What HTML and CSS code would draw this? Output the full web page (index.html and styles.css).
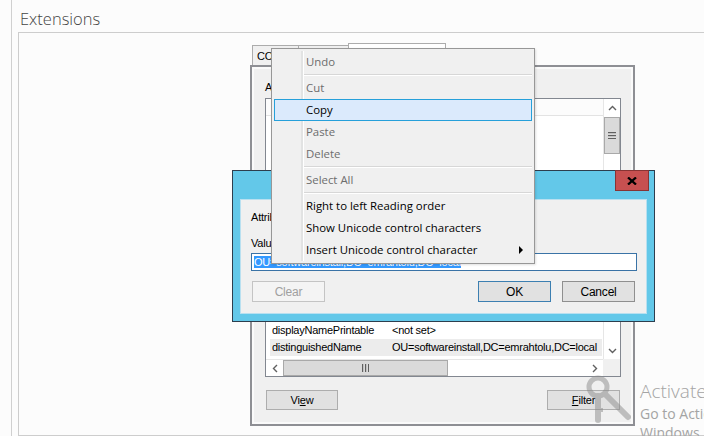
FILE: index.html
```html
<!DOCTYPE html>
<html>
<head>
<meta charset="utf-8">
<title>Extensions</title>
<link rel="stylesheet" href="styles.css">
</head>
<body>
<div class="page">
  <div class="title">Extensions</div>
  <div class="box">

    <div class="propwin">
      <div class="tabs">
        <div class="tab t1">COM+</div>
        <div class="tab t2">Object</div>
        <div class="tab t3">Attribute Editor</div>
      </div>
      <div class="frame">
        <div class="lbl">Attributes:</div>
        <div class="list">
          <div class="list-main">
            <div class="list-head"><span class="c1">Attribute</span><span class="c2">Value</span></div>
            <div class="rows">
              <div class="row"><span class="c1">adminDescription</span><span class="c2">&lt;not set&gt;</span></div>
              <div class="row"><span class="c1">adminDisplayName</span><span class="c2">&lt;not set&gt;</span></div>
              <div class="row"><span class="c1">businessCategory</span><span class="c2">&lt;not set&gt;</span></div>
              <div class="row"><span class="c1">c</span><span class="c2">&lt;not set&gt;</span></div>
              <div class="row"><span class="c1">co</span><span class="c2">&lt;not set&gt;</span></div>
              <div class="row"><span class="c1">countryCode</span><span class="c2">&lt;not set&gt;</span></div>
              <div class="row"><span class="c1">defaultGroup</span><span class="c2">&lt;not set&gt;</span></div>
              <div class="row"><span class="c1">description</span><span class="c2">&lt;not set&gt;</span></div>
              <div class="row"><span class="c1">desktopProfile</span><span class="c2">&lt;not set&gt;</span></div>
              <div class="row"><span class="c1">destinationIndicator</span><span class="c2">&lt;not set&gt;</span></div>
              <div class="row"><span class="c1">displayName</span><span class="c2">&lt;not set&gt;</span></div>
              <div class="row"><span class="c1">displayNamePrintable</span><span class="c2">&lt;not set&gt;</span></div>
              <div class="row sel"><span class="c1">distinguishedName</span><span class="c2">OU=softwareinstall,DC=emrahtolu,DC=local</span></div>
            </div>
          </div>
          <div class="vscroll">
            <div class="sb-btn"><svg width="9" height="6" viewBox="0 0 9 6"><polyline points="1,5 4.5,1.5 8,5" fill="none" stroke="#606060" stroke-width="1.4"/></svg></div>
            <div class="vthumb"><svg width="8" height="7" viewBox="0 0 8 7"><rect x="0" y="0" width="8" height="1.2" fill="#606060"/><rect x="0" y="3" width="8" height="1.2" fill="#606060"/><rect x="0" y="6" width="8" height="1" fill="#606060"/></svg></div>
            <div class="vtrack"></div>
            <div class="sb-btn"><svg width="9" height="6" viewBox="0 0 9 6"><polyline points="1,1 4.5,4.5 8,1" fill="none" stroke="#606060" stroke-width="1.4"/></svg></div>
          </div>
          <div class="hscroll">
            <div class="sb-btn h"><svg width="6" height="9" viewBox="0 0 6 9"><polyline points="5,1 1.5,4.5 5,8" fill="none" stroke="#606060" stroke-width="1.4"/></svg></div>
            <div class="hthumb"><svg width="7" height="8" viewBox="0 0 7 8"><rect x="0" y="0" width="1.2" height="8" fill="#606060"/><rect x="3" y="0" width="1.2" height="8" fill="#606060"/><rect x="6" y="0" width="1" height="8" fill="#606060"/></svg></div>
            <div class="htrack"></div>
            <div class="sb-btn h"><svg width="6" height="9" viewBox="0 0 6 9"><polyline points="1,1 4.5,4.5 1,8" fill="none" stroke="#606060" stroke-width="1.4"/></svg></div>
          </div>
          <div class="corner"></div>
        </div>
        <div class="btnrow">
          <button class="btn">Vi<u>e</u>w</button>
          <button class="btn"><u>F</u>ilter</button>
        </div>
      </div>
    </div>

    <div class="dlg">
      <div class="dlg-close"><svg width="10" height="8" viewBox="0 0 10 8"><path d="M1 0.5 L9 7.5 M9 0.5 L1 7.5" stroke="#000" stroke-width="2.3" fill="none"/></svg></div>
      <div class="dlg-body">
        <div class="d-lbl">Attribute:</div>
        <div class="d-lbl d-lbl2">Value:</div>
        <div class="d-input"><span class="selt">OU=softwareinstall,DC=emrahtolu,DC=local</span></div>
        <div class="d-btns">
          <button class="btn dbtn dis">Clear</button>
          <button class="btn dbtn def">OK</button>
          <button class="btn dbtn cancel">Cancel</button>
        </div>
      </div>
    </div>

    <div class="menu">
      <div class="mi dis">Undo</div>
      <div class="sep"></div>
      <div class="mi dis">Cut</div>
      <div class="mi hl">Copy</div>
      <div class="mi dis">Paste</div>
      <div class="mi dis">Delete</div>
      <div class="sep"></div>
      <div class="mi dis">Select All</div>
      <div class="sep"></div>
      <div class="mi">Right to left Reading order</div>
      <div class="mi">Show Unicode control characters</div>
      <div class="mi">Insert Unicode control character<span class="sub"></span></div>
    </div>

  </div>
</div>

<svg class="key" width="52" height="54" viewBox="0 0 52 54">
  <circle cx="15" cy="15" r="9" fill="none" stroke="#8c8c8c" stroke-width="5"/>
  <path d="M15 24 L15 48" stroke="#8c8c8c" stroke-width="6" stroke-linecap="round"/>
  <path d="M22 22 L45 45" stroke="#8c8c8c" stroke-width="6" stroke-linecap="round"/>
  <path d="M15 38 L20 38" stroke="#8c8c8c" stroke-width="4"/>
</svg>
<div class="wm">
  <div class="wm1">Activate Windows</div>
  <div class="wm2">Go to Action Center to activate</div>
  <div class="wm2">Windows.</div>
</div>
</body>
</html>
```
FILE: styles.css
```css
* { box-sizing: border-box; margin: 0; padding: 0; }
html, body { width: 704px; height: 436px; overflow: hidden; }
body {
  background: #fcfcfc;
  font-family: "Liberation Sans", Arial, sans-serif;
  font-size: 11px;
  color: #000;
  position: relative;
}
.page {
  margin-left: 11px;
  border-left: 1px solid #d0d0d0;
  height: 436px;
  padding-left: 6px;
}
.title {
  height: 32px;
  padding: 5px 0 0 2px;
  font-family: "Open Sans", sans-serif;
  font-weight: 300;
  font-size: 16.5px;
  line-height: 27px;
  color: #444;
}
.box {
  position: relative;
  width: 720px;
  height: 404px;
  border: 1px solid #cdcdcd;
  background: #fcfcfc;
}

/* property window */
.propwin {
  position: absolute;
  left: 231px;
  top: 10px;
  width: 385px;
}
.tabs {
  display: flex;
  align-items: flex-end;
  height: 22px;
  padding-left: 2px;
}
.tab {
  height: 20px;
  border: 1px solid #acacac;
  border-bottom: none;
  background: #f0f0f0;
  padding: 0 4px;
  line-height: 20px;
  white-space: nowrap;
  overflow: hidden;
  letter-spacing: -0.2px;
}
.t1 { width: 47px; }
.t2 { width: 51px; margin-left: -1px; }
.t3 { width: 98px; height: 22px; background: #fff; margin-left: -1px; }
.frame {
  height: 361px;
  border: 2px solid #8e8f94;
  background: #f0f0f0;
  box-shadow: inset 0 0 0 2px #fafafa;
  padding: 13px 12px 0 13px;
  display: flex;
  flex-direction: column;
}
.lbl { height: 14px; line-height: 14px; margin-bottom: 4px; }
.list {
  height: 279px;
  border: 1px solid #828790;
  background: #fff;
  display: grid;
  grid-template-columns: 1fr 17px;
  grid-template-rows: 1fr 17px;
}
.list-main {
  display: flex;
  flex-direction: column;
  min-height: 0;
  overflow: hidden;
}
.list-head {
  height: 17px;
  flex: none;
  display: flex;
  background: #fcfcfc;
  border-bottom: 1px solid #e3e3e3;
  line-height: 16px;
  padding-left: 4px;
}
.rows {
  flex: 1;
  display: flex;
  flex-direction: column;
  justify-content: flex-end;
  padding-bottom: 3px;
  overflow: hidden;
}
.row {
  height: 17px;
  flex: none;
  line-height: 17px;
  display: flex;
  margin: 0 1px 0 4px;
  white-space: nowrap;
  letter-spacing: -0.25px;
}
.c1 { width: 120px; padding-left: 2px; flex: none; }
.c2 { padding-left: 2px; }
.row.sel { background: #ececec; }

.vscroll {
  display: flex;
  flex-direction: column;
  background: #fff;
  border-left: 1px solid #e6e6e6;
}
.sb-btn {
  height: 17px;
  flex: none;
  display: flex;
  align-items: center;
  justify-content: center;
  background: #fff;
}
.sb-btn.h { width: 17px; height: 100%; }
.vthumb {
  height: 37px;
  margin-top: 1px;
  background: #dadada;
  border: 1px solid #a9a9a9;
  display: flex;
  align-items: center;
  justify-content: center;
}
.vtrack { flex: 1; }
.hscroll {
  display: flex;
  background: #fff;
  border-top: 1px solid #e6e6e6;
}
.hthumb {
  width: 165px;
  background: #dadada;
  border: 1px solid #a9a9a9;
  display: flex;
  align-items: center;
  justify-content: center;
}
.htrack { flex: 1; }
.corner { background: #f0f0f0; }

.btnrow {
  margin-top: 13px;
  display: flex;
  justify-content: space-between;
  padding: 0 1px;
}
.btn {
  width: 73px;
  height: 20px;
  border: 1px solid #adadad;
  background: #e1e1e1;
  font-family: "Liberation Sans", Arial, sans-serif;
  font-size: 11px;
  color: #000;
  letter-spacing: -0.2px;
}
.btnrow .btn:first-child { width: 72px; }

/* dialog */
.dlg {
  position: absolute;
  left: 213px;
  top: 137px;
  width: 423px;
  height: 152px;
  border: 1px solid #2d3e4e;
  background: #63c8e9;
  padding: 28px 7px 7px;
}
.dlg-close {
  position: absolute;
  right: 5px;
  top: -1px;
  width: 34px;
  height: 21px;
  background: #c75050;
  border: 1px solid #873434;
  display: flex;
  align-items: center;
  justify-content: center;
}
.dlg-body {
  height: 115px;
  background: #f0f0f0;
  border: 1px solid #b9e0f0;
  padding: 10px 9px 11px 10px;
}
.d-lbl { height: 14px; line-height: 14px; letter-spacing: -0.2px; }
.d-lbl2 { margin-top: 12px; }
.d-input {
  margin-top: 3px;
  height: 18px;
  border: 1px solid #3a73a6;
  background: #fff;
  padding-left: 2px;
  line-height: 16px;
  white-space: nowrap;
  overflow: hidden;
  letter-spacing: -0.2px;
}
.selt { background: #3399ff; color: #fff; }
.d-btns {
  margin-top: 10px;
  display: flex;
  gap: 11px;
  padding: 0 2px 0 1px;
}
.dbtn { height: 21px; font-size: 12px; }
.dbtn.dis {
  margin-right: auto;
  background: #f4f4f4;
  border-color: #c4c4c4;
  color: #a0a0a0;
}
.dbtn.def { border-color: #3c7fb1; }
.dbtn.cancel { border-color: #8f8f8f; }

/* context menu */
.menu {
  position: absolute;
  left: 252px;
  top: 15px;
  width: 264px;
  height: 216px;
  border: 1px solid #979797;
  background: #f0f0f0;
  padding: 2px;
  font-family: "Open Sans", sans-serif;
  font-size: 11.4px;
  box-shadow: 1px 1px 2px rgba(0,0,0,0.12);
}
.menu::before {
  content: "";
  position: absolute;
  left: 29px;
  top: 2px;
  bottom: 2px;
  width: 2px;
  background: #e2e3e3;
  border-right: 1px solid #fff;
}
.mi {
  position: relative;
  height: 22px;
  line-height: 20px;
  padding-left: 31px;
  border: 1px solid transparent;
  color: #000;
  white-space: nowrap;
}
.mi.dis { color: #6d6d6d; }
.mi.hl { background: #dbeafc; border-color: #26a0da; }
.sep {
  height: 2px;
  margin: 1px 0 1px 28px;
  background: #d7d7d7;
  border-bottom: 1px solid #fff;
}
.sub {
  position: absolute;
  right: 8px;
  top: 6px;
  width: 0;
  height: 0;
  border-left: 4px solid #000;
  border-top: 4px solid transparent;
  border-bottom: 4px solid transparent;
}

/* watermark */
.key {
  position: absolute;
  left: 583px;
  top: 372px;
  opacity: 0.5;
}
.wm {
  position: absolute;
  left: 640px;
  top: 378px;
  color: #a4a4a4;
  font-family: "Open Sans", sans-serif;
  white-space: nowrap;
}
.wm1 { font-size: 19px; font-weight: 300; line-height: 26px; }
.wm2 { font-size: 14px; line-height: 19px; }
```
